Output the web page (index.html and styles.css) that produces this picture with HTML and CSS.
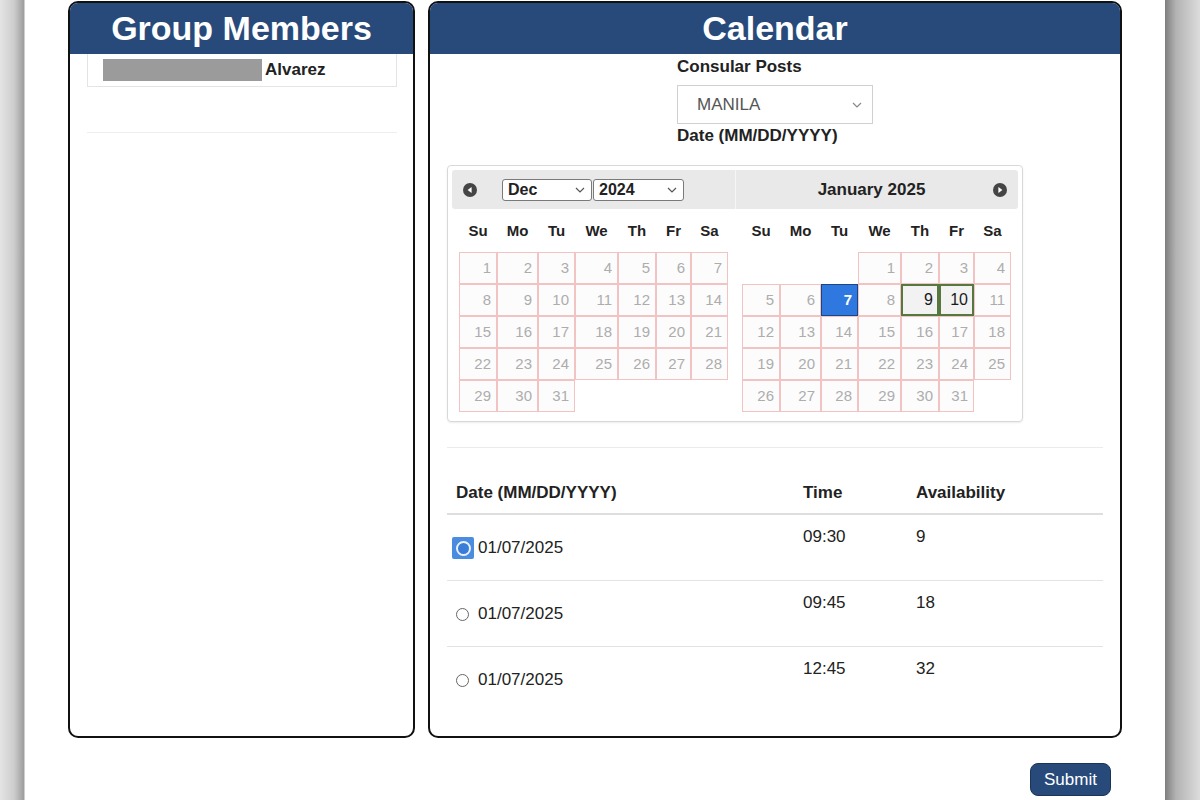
FILE: index.html
```html
<!DOCTYPE html>
<html lang="en">
<head>
    <meta charset="UTF-8">
    <meta name="viewport" content="width=device-width, initial-scale=1.0">
    <title>Appointment</title>
    <link rel="stylesheet" href="styles.css">
</head>
<body>
<div class="page">
    <div class="panels">

        <div class="panel">
            <h1 class="panel-title">Group Members</h1>
            <div class="member-list">
                <div class="member-row">
                    <span class="redacted"></span>
                    <span class="member-name">Alvarez</span>
                </div>
                <div class="member-empty"></div>
            </div>
        </div>

        <div class="panel">
            <h1 class="panel-title">Calendar</h1>
            <div class="post-form">
                <label class="field-label">Consular Posts</label>
                <div class="post-select">
                    <span>MANILA</span>
                    <svg width="10" height="6" viewBox="0 0 10 6"><polyline points="1,1 5,5 9,1" fill="none" stroke="#888" stroke-width="1.2"/></svg>
                </div>
                <label class="field-label date-label">Date (MM/DD/YYYY)</label>
            </div>

            <div class="content">
                <div class="datepicker">
                    <div class="dp-group">
                        <div class="dp-header first">
                            <svg class="dp-nav" width="14" height="14" viewBox="0 0 14 14"><circle cx="7" cy="7" r="7" fill="#454545"/><polygon points="8.6,4 8.6,10 4.6,7" fill="#fff"/></svg>
                            <div class="dp-selects">
                                <div class="dp-select"><span>Dec</span><svg width="10" height="6" viewBox="0 0 10 6"><polyline points="1,1 5,5 9,1" fill="none" stroke="#555" stroke-width="1.2"/></svg></div>
                                <div class="dp-select"><span>2024</span><svg width="10" height="6" viewBox="0 0 10 6"><polyline points="1,1 5,5 9,1" fill="none" stroke="#555" stroke-width="1.2"/></svg></div>
                            </div>
                        </div>
                        <table class="dp-month">
                            <colgroup><col class="c1"><col class="c2"><col class="c3"><col class="c4"><col class="c5"><col class="c6"><col class="c7"></colgroup>
                            <thead>
                                <tr><th>Su</th><th>Mo</th><th>Tu</th><th>We</th><th>Th</th><th>Fr</th><th>Sa</th></tr>
                            </thead>
                            <tbody>
                                <tr><td><a>1</a></td><td><a>2</a></td><td><a>3</a></td><td><a>4</a></td><td><a>5</a></td><td><a>6</a></td><td><a>7</a></td></tr>
                                <tr><td><a>8</a></td><td><a>9</a></td><td><a>10</a></td><td><a>11</a></td><td><a>12</a></td><td><a>13</a></td><td><a>14</a></td></tr>
                                <tr><td><a>15</a></td><td><a>16</a></td><td><a>17</a></td><td><a>18</a></td><td><a>19</a></td><td><a>20</a></td><td><a>21</a></td></tr>
                                <tr><td><a>22</a></td><td><a>23</a></td><td><a>24</a></td><td><a>25</a></td><td><a>26</a></td><td><a>27</a></td><td><a>28</a></td></tr>
                                <tr><td><a>29</a></td><td><a>30</a></td><td><a>31</a></td><td></td><td></td><td></td><td></td></tr>
                            </tbody>
                        </table>
                    </div>

                    <div class="dp-group">
                        <div class="dp-header last">
                            <span></span>
                            <span class="dp-title">January 2025</span>
                            <svg class="dp-nav next" width="14" height="14" viewBox="0 0 14 14"><circle cx="7" cy="7" r="7" fill="#454545"/><polygon points="5.4,4 5.4,10 9.4,7" fill="#fff"/></svg>
                        </div>
                        <table class="dp-month">
                            <colgroup><col class="c1"><col class="c2"><col class="c3"><col class="c4"><col class="c5"><col class="c6"><col class="c7"></colgroup>
                            <thead>
                                <tr><th>Su</th><th>Mo</th><th>Tu</th><th>We</th><th>Th</th><th>Fr</th><th>Sa</th></tr>
                            </thead>
                            <tbody>
                                <tr><td></td><td></td><td></td><td><a>1</a></td><td><a>2</a></td><td><a>3</a></td><td><a>4</a></td></tr>
                                <tr><td><a>5</a></td><td><a>6</a></td><td><a class="selected">7</a></td><td><a>8</a></td><td><a class="open">9</a></td><td><a class="open">10</a></td><td><a>11</a></td></tr>
                                <tr><td><a>12</a></td><td><a>13</a></td><td><a>14</a></td><td><a>15</a></td><td><a>16</a></td><td><a>17</a></td><td><a>18</a></td></tr>
                                <tr><td><a>19</a></td><td><a>20</a></td><td><a>21</a></td><td><a>22</a></td><td><a>23</a></td><td><a>24</a></td><td><a>25</a></td></tr>
                                <tr><td><a>26</a></td><td><a>27</a></td><td><a>28</a></td><td><a>29</a></td><td><a>30</a></td><td><a>31</a></td><td></td></tr>
                            </tbody>
                        </table>
                    </div>
                </div>

                <hr class="divider">

                <table class="slots">
                    <colgroup><col class="col-date"><col class="col-time"><col></colgroup>
                    <thead>
                        <tr><th>Date (MM/DD/YYYY)</th><th>Time</th><th>Availability</th></tr>
                    </thead>
                    <tbody>
                        <tr>
                            <td class="date-cell"><div class="slot-date"><span class="radio-focus"><span class="radio-ring"></span></span>01/07/2025</div></td>
                            <td>09:30</td>
                            <td>9</td>
                        </tr>
                        <tr>
                            <td class="date-cell"><div class="slot-date"><span class="radio"></span>01/07/2025</div></td>
                            <td>09:45</td>
                            <td>18</td>
                        </tr>
                        <tr>
                            <td class="date-cell"><div class="slot-date"><span class="radio"></span>01/07/2025</div></td>
                            <td>12:45</td>
                            <td>32</td>
                        </tr>
                    </tbody>
                </table>
            </div>
        </div>

    </div>
    <div class="actions">
        <button class="submit">Submit</button>
    </div>
</div>
</body>
</html>
```

FILE: styles.css
```css
*{
    margin: 0;
    padding: 0;
    box-sizing: border-box;
}
html, body{
    height: 100%;
}
body{
    font-family: "Liberation Sans", Arial, Helvetica, sans-serif;
    color: #222;
    overflow: hidden;
    background: linear-gradient(to right,
        #e4e4e4 0, #cdcdcd 14px, #9d9d9d 24px, #fff 25px,
        #fff 1165px, #7e7e7e 1165px, #b3b3b3 1176px, #dcdcdc 1200px);
}

.page{
    width: 1054px;
    margin-left: 68px;
    padding-top: 1px;
}
.panels{
    display: grid;
    grid-template-columns: 347px 694px;
    gap: 13px;
    height: 737px;
}
.panel{
    border: 2px solid #111;
    border-radius: 10px;
    overflow: hidden;
    background: #fff;
}
.panel-title{
    background: #274a7b;
    color: #fff;
    font-size: 34px;
    line-height: 51px;
    text-align: center;
    font-weight: bold;
}

/* group members */
.member-list{
    margin: 0 16px 0 17px;
}
.member-row{
    height: 33px;
    border: 1px solid #e4e4e4;
    border-top: none;
    display: flex;
    align-items: center;
    padding: 0 15px;
}
.redacted{
    width: 159px;
    height: 22px;
    background: #9b9b9b;
}
.member-name{
    font-size: 17px;
    font-weight: bold;
    margin-left: 3px;
}
.member-empty{
    height: 46px;
    border-bottom: 1px solid #eeeeee;
}

/* consular post form */
.post-form{
    width: 196px;
    margin: 3px auto 0;
}
.field-label{
    display: block;
    font-size: 17px;
    line-height: 20px;
    font-weight: bold;
}
.post-select{
    margin-top: 8px;
    height: 39px;
    border: 1px solid #d0d0d0;
    display: flex;
    align-items: center;
    justify-content: space-between;
    padding: 0 10px 0 19px;
    font-size: 17px;
    color: #555;
}
.date-label{
    margin-top: 2px;
}

.content{
    padding: 0 17px;
}

/* datepicker */
.datepicker{
    margin-top: 19px;
    width: 576px;
    border: 1px solid #d8d8d8;
    border-radius: 4px;
    padding: 4px;
    display: flex;
    box-shadow: 0 1px 2px rgba(0, 0, 0, .08);
}
.dp-group{
    width: 283px;
}
.dp-header{
    height: 39px;
    background: #e9e9e9;
    display: flex;
    align-items: center;
}
.dp-header.first{
    border-radius: 3px 0 0 3px;
    padding-left: 11px;
}
.dp-header.last{
    border-radius: 0 3px 3px 0;
    border-left: 1px solid #f6f6f6;
    display: grid;
    grid-template-columns: 1fr auto 1fr;
    padding-right: 11px;
}
.dp-nav.next{
    justify-self: end;
}
.dp-title{
    font-size: 17px;
    font-weight: bold;
}
.dp-selects{
    display: flex;
    gap: 1px;
    margin-left: 25px;
}
.dp-select{
    width: 90px;
    height: 22px;
    border: 1px solid #7a7a7a;
    border-radius: 3px;
    background: #fff;
    display: flex;
    align-items: center;
    justify-content: space-between;
    padding: 0 6px 0 5px;
    font-size: 16px;
    font-weight: bold;
}
.dp-select + .dp-select{
    width: 91px;
}

.dp-month{
    width: 269px;
    margin: 0 7px 5px;
    border-collapse: separate;
    border-spacing: 0;
    table-layout: fixed;
}
.dp-month .c1{ width: 38px; }
.dp-month .c2{ width: 41px; }
.dp-month .c3{ width: 37px; }
.dp-month .c4{ width: 43px; }
.dp-month .c5{ width: 38px; }
.dp-month .c6{ width: 35px; }
.dp-month .c7{ width: 37px; }
.dp-month th{
    height: 43px;
    font-size: 15px;
    font-weight: bold;
    text-align: center;
}
.dp-month td{
    height: 32px;
    padding: 0;
}
.dp-month td a{
    display: block;
    height: 32px;
    border: 1px solid #f1c3c3;
    background: #fcfcfc;
    color: #adadad;
    text-align: right;
    padding-right: 5px;
    font-size: 15px;
    line-height: 30px;
}
.dp-month td a.selected{
    background: #2f78e0;
    border-color: #1d4680;
    color: #fff;
    font-weight: bold;
}
.dp-month td a.open{
    background: #f2f2f2;
    border: 2px solid #56783f;
    color: #1a1a1a;
    font-size: 16px;
    line-height: 28px;
    padding-right: 4px;
}

.divider{
    border: none;
    border-top: 1px solid #ebebeb;
    margin-top: 25px;
}

/* time slots */
.slots{
    width: 100%;
    border-collapse: collapse;
    table-layout: fixed;
}
.slots .col-date{ width: 347px; }
.slots .col-time{ width: 113px; }
.slots th{
    text-align: left;
    padding: 35px 9px 10px;
    font-size: 17px;
    line-height: 20px;
    font-weight: bold;
    border-bottom: 2px solid #dedede;
}
.slots td{
    vertical-align: top;
    padding: 12px 9px;
    font-size: 17px;
    line-height: 20px;
    border-top: 1px solid #e3e3e3;
}
.slots tbody tr:first-child td{
    border-top: none;
}
.slots td.date-cell{
    padding-top: 23px;
    padding-bottom: 22px;
}
.slot-date{
    height: 20px;
    display: flex;
    align-items: center;
}
.radio{
    width: 13px;
    height: 13px;
    border: 1px solid #666;
    border-radius: 50%;
    background: #fff;
    margin-right: 9px;
}
.radio-focus{
    width: 22px;
    height: 22px;
    margin-left: -4px;
    margin-right: 4px;
    background: #4a8de0;
    border-radius: 2px;
    display: flex;
    align-items: center;
    justify-content: center;
}
.radio-ring{
    width: 15px;
    height: 15px;
    border: 2px solid #eaf1fb;
    border-radius: 50%;
    background: #3a7dd8;
}

.actions{
    display: flex;
    justify-content: flex-end;
    padding-right: 11px;
    margin-top: 25px;
}
.submit{
    width: 81px;
    height: 33px;
    background: #274a7b;
    color: #fff;
    border: 1px solid #1b3558;
    border-radius: 8px;
    font-family: "Liberation Sans", Arial, sans-serif;
    font-size: 17px;
}
```
